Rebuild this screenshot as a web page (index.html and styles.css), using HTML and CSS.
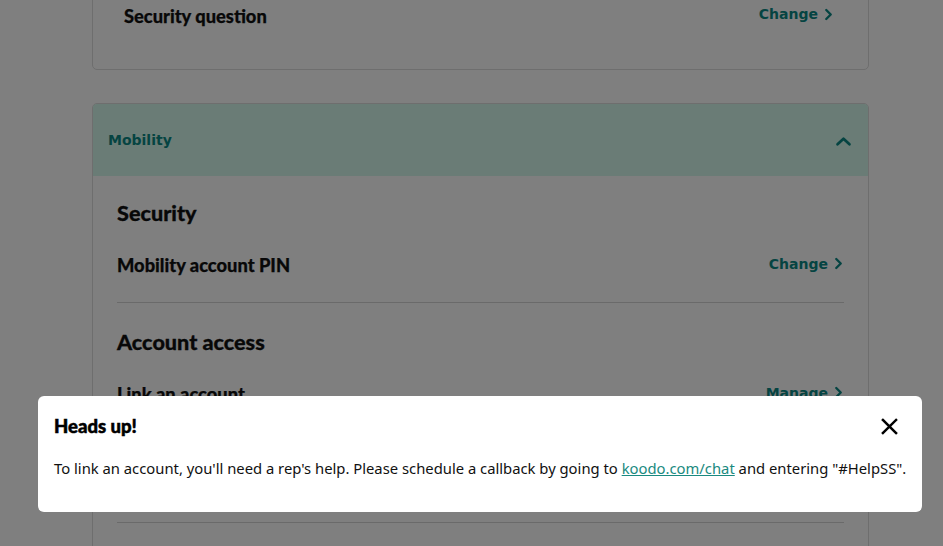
FILE: index.html
```html
<!DOCTYPE html>
<html lang="en">
<head>
<meta charset="utf-8">
<title>Account settings</title>
<link rel="stylesheet" href="styles.css">
</head>
<body>
<main class="page">
  <section class="card card-top">
    <div class="row">
      <span class="row-label">Security question</span>
      <a class="action" href="#">Change <svg class="chev" viewBox="0 0 10 14" width="9" height="13"><path d="M2.5 2 L7.5 7 L2.5 12" fill="none" stroke="currentColor" stroke-width="2.6" stroke-linecap="round" stroke-linejoin="round"/></svg></a>
    </div>
  </section>

  <section class="card card-acc">
    <header class="acc-head">
      <span class="acc-title">Mobility</span>
      <svg class="acc-chev" viewBox="0 0 18 12" width="17" height="11"><path d="M2.5 9 L9 3 L15.5 9" fill="none" stroke="currentColor" stroke-width="3" stroke-linecap="round" stroke-linejoin="round"/></svg>
    </header>
    <div class="acc-body">
      <h2 class="sec-title">Security</h2>
      <div class="row row-item">
        <span class="row-label">Mobility account PIN</span>
        <a class="action" href="#">Change <svg class="chev" viewBox="0 0 10 14" width="9" height="13"><path d="M2.5 2 L7.5 7 L2.5 12" fill="none" stroke="currentColor" stroke-width="2.6" stroke-linecap="round" stroke-linejoin="round"/></svg></a>
      </div>
      <hr class="divider">
      <h2 class="sec-title">Account access</h2>
      <div class="row row-item">
        <span class="row-label">Link an account</span>
        <a class="action" href="#">Manage <svg class="chev" viewBox="0 0 10 14" width="9" height="13"><path d="M2.5 2 L7.5 7 L2.5 12" fill="none" stroke="currentColor" stroke-width="2.6" stroke-linecap="round" stroke-linejoin="round"/></svg></a>
      </div>
      <hr class="divider divider-low">
    </div>
  </section>
</main>

<div class="overlay"></div>

<div class="modal" role="dialog" aria-labelledby="modal-title">
  <div class="modal-head">
    <h3 id="modal-title" class="modal-title">Heads up!</h3>
    <button class="close" aria-label="Close"><svg viewBox="0 0 18 18" width="17" height="17"><path d="M2 2 L16 16 M16 2 L2 16" stroke="#000" stroke-width="2.6" stroke-linecap="square"/></svg></button>
  </div>
  <p class="modal-text">To link an account, you'll need a rep's help. Please schedule a callback by going to <a href="#" class="modal-link">koodo.com/chat</a> and entering "#HelpSS".</p>
</div>
</body>
</html>
```

FILE: styles.css
```css
* { box-sizing: border-box; }
html, body { margin: 0; padding: 0; }
body {
  background: #fff;
  font-family: Lato, "Liberation Sans", sans-serif;
  color: #111;
  width: 943px;
  height: 546px;
  overflow: hidden;
}
.page {
  width: 777px;
  margin: -22px 0 0 92px;
  display: flex;
  flex-direction: column;
  gap: 33px;
}
.card {
  border: 1px solid #dcdcdc;
  border-radius: 5px;
  background: #fff;
}
.card-top {
  padding: 24px 35px 40px 31px;
}
.row {
  display: flex;
  align-items: center;
  justify-content: space-between;
  height: 26px;
}
.row-label {
  font-weight: 900;
  font-size: 18.3px;
  color: #111;
  -webkit-text-stroke: 0.25px #111;
}
.action {
  font-family: "DejaVu Sans", Verdana, sans-serif;
  font-weight: 700;
  font-size: 14px;
  color: #0a8884;
  text-decoration: none;
  display: flex;
  align-items: center;
  gap: 6px;
}
.card-top .action { margin-top: -4px; }
.row-item .action { margin-top: -3px; margin-right: 1px; }
.chev { display: block; }
.acc-head {
  height: 72px;
  background: #d4f9ec;
  border-radius: 4px 4px 0 0;
  display: flex;
  align-items: center;
  justify-content: space-between;
  padding: 0 16px 0 15px;
}
.acc-title {
  font-family: "DejaVu Sans", Verdana, sans-serif;
  font-weight: 700;
  font-size: 14px;
  color: #0a8884;
}
.acc-chev { color: #0a8884; display: block; margin-top: 3px; }
.acc-body {
  padding: 24px 24px 0 24px;
}
.sec-title {
  margin: 0 0 26px;
  font-size: 21.6px;
  line-height: 26px;
  font-weight: 900;
  color: #111;
  -webkit-text-stroke: 0.3px #111;
}
.divider {
  border: 0;
  border-top: 1px solid #d4d4d4;
  margin: 24px 0 26px;
}
.divider-low {
  margin: 115px 0 40px;
}
.overlay {
  position: fixed;
  inset: 0;
  background: rgba(0, 0, 0, 0.5);
}
.modal {
  position: fixed;
  left: 38px;
  top: 396px;
  width: 884px;
  height: 116px;
  background: #fff;
  border-radius: 6px;
  padding: 19px 24px 0 16px;
}
.modal-head {
  display: flex;
  align-items: center;
  justify-content: space-between;
  height: 22px;
}
.modal-title {
  margin: 0;
  font-size: 18.5px;
  font-weight: 900;
  line-height: 22px;
  color: #000;
  -webkit-text-stroke: 0.5px #000;
}
.close {
  border: 0;
  background: none;
  padding: 0;
  display: block;
  cursor: pointer;
}
.close svg { display: block; }
.modal-text {
  margin: 20px 0 0;
  font-family: "Noto Sans", sans-serif;
  font-size: 14.8px;
  line-height: 22px;
  color: #111;
  white-space: nowrap;
}
.modal-link {
  color: #1a8a80;
  text-decoration: underline;
}
```
